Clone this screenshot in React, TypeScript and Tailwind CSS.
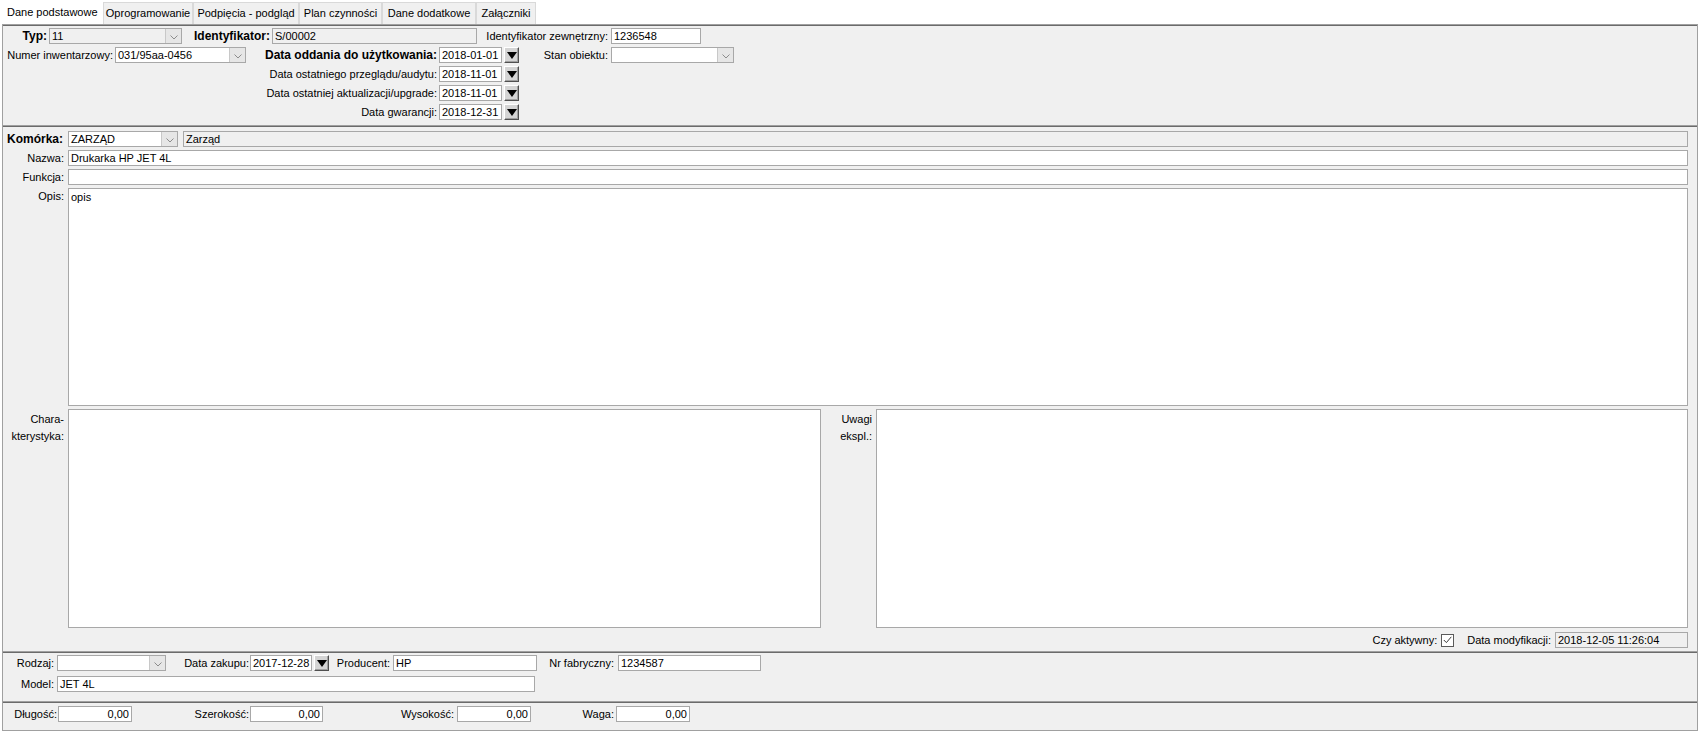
import type { ReactNode } from "react";

function Label({ className = "", bold = false, children }: { className?: string; bold?: boolean; children?: ReactNode }) {
    return (
        <div className={`flex h-4 shrink-0 items-center justify-end whitespace-nowrap ${bold ? "text-[12px] font-bold" : ""} ${className}`}>
            {children}
        </div>
    );
}

function Field({ className = "", value = "", grey = false, right = false }: { className?: string; value?: string; grey?: boolean; right?: boolean }) {
    return (
        <div className={`h-4 shrink-0 overflow-hidden whitespace-nowrap border border-[#a8a8a8] px-[2px] leading-[14px] ${grey ? "bg-[#f0f0f0]" : "bg-white"} ${right ? "text-right" : ""} ${className}`}>
            {value}
        </div>
    );
}

function Combo({ className = "", value = "", grey = false }: { className?: string; value?: string; grey?: boolean }) {
    return (
        <div className={`flex h-4 shrink-0 border border-[#a8a8a8] ${grey ? "bg-[#f0f0f0]" : "bg-white"} ${className}`}>
            <div className="flex-1 overflow-hidden whitespace-nowrap px-[2px] leading-[14px]">{value}</div>
            <div className="flex w-[16px] items-end justify-center border-l border-[#c8c8c8] bg-[#e6e6e6] pb-[3px]">
                <svg width="8" height="5" viewBox="0 0 8 5">
                    <path d="M0.5 0.5 L4 4 L7.5 0.5" stroke="#8c8c8c" strokeWidth="1" fill="none" />
                </svg>
            </div>
        </div>
    );
}

function DateBtn() {
    return (
        <div className="ml-[2px] flex h-4 w-[15px] shrink-0 items-center justify-center border border-b-[#505050] border-l-white border-r-[#505050] border-t-white bg-[#d4d4d4] shadow-[inset_-1px_-1px_0_#a0a0a0]">
            <svg width="10" height="7" viewBox="0 0 10 7">
                <path d="M0 0 H10 L5 7 Z" fill="#000" />
            </svg>
        </div>
    );
}

function DateRow({ label, value, bold = false, children }: { label: string; value: string; bold?: boolean; children?: ReactNode }) {
    return (
        <div className="flex h-4 items-center">
            <Label className="w-[436px] pr-[2px]" bold={bold}>{label}</Label>
            <Field className="w-[63px]" value={value} />
            <DateBtn />
            {children}
        </div>
    );
}

function Panel({ className = "", children }: { className?: string; children?: ReactNode }) {
    return (
        <div className={`shrink-0 border-x border-t border-[#a0a0a0] bg-[#f0f0f0] shadow-[inset_0_1px_0_#6b6b6b] ${className}`}>
            {children}
        </div>
    );
}

const tabs = ["Oprogramowanie", "Podpięcia - podgląd", "Plan czynności", "Dane dodatkowe", "Załączniki"];
const tabWidths = ["w-[90px]", "w-[106px]", "w-[83px]", "w-[94px]", "w-[60px]"];

export default function App() {
    return (
        <div className="flex h-[732px] w-[1700px] flex-col overflow-hidden bg-white font-['Liberation_Sans',Arial,sans-serif] text-[11px] text-black">
            {/* zakładki */}
            <div className="flex h-[24px] shrink-0 items-end">
                <div className="flex h-[24px] w-[103px] items-center bg-white pl-[7px] text-[11px]">Dane podstawowe</div>
                {tabs.map((t, i) => (
                    <div key={t} className={`flex h-[22px] items-center justify-center border border-b-0 border-[#d9d9d9] bg-[#f0f0f0] text-[11px] ${tabWidths[i]}`}>
                        {t}
                    </div>
                ))}
            </div>

            <div className="flex flex-1 flex-col px-[2px] pb-[1px]">
                {/* nagłówek */}
                <Panel className="flex h-[101px] flex-col gap-[3px] pt-[3px]">
                    <div className="flex h-4 items-center">
                        <Label className="w-[46px] pr-[2px]" bold>Typ:</Label>
                        <Combo className="w-[133px]" value="11" grey />
                        <Label className="w-[90px] pr-[2px]" bold>Identyfikator:</Label>
                        <Field className="w-[205px]" value="S/00002" grey />
                        <Label className="w-[134px] pr-[3px]">Identyfikator zewnętrzny:</Label>
                        <Field className="w-[90px]" value="1236548" />
                    </div>
                    <div className="flex h-4 items-center">
                        <Label className="w-[112px] pr-[2px]">Numer inwentarzowy:</Label>
                        <Combo className="w-[131px]" value="031/95aa-0456" />
                        <Label className="w-[193px] pr-[2px]" bold>Data oddania do użytkowania:</Label>
                        <Field className="w-[63px]" value="2018-01-01" />
                        <DateBtn />
                        <Label className="w-[92px] pr-[3px]">Stan obiektu:</Label>
                        <Combo className="w-[123px]" />
                    </div>
                    <DateRow label="Data ostatniego przeglądu/audytu:" value="2018-11-01" />
                    <DateRow label="Data ostatniej aktualizacji/upgrade:" value="2018-11-01" />
                    <DateRow label="Data gwarancji:" value="2018-12-31" />
                </Panel>

                {/* dane obiektu */}
                <Panel className="flex h-[526px] flex-col gap-[3px] pr-[9px] pt-[5px]">
                    <div className="flex h-4 items-center">
                        <Label className="w-[65px] pr-[5px]" bold>Komórka:</Label>
                        <Combo className="w-[110px]" value="ZARZĄD" />
                        <Field className="ml-[5px] flex-1" value="Zarząd" grey />
                    </div>
                    <div className="flex h-4 items-center">
                        <Label className="w-[65px] pr-[4px]">Nazwa:</Label>
                        <Field className="flex-1" value="Drukarka HP JET 4L" />
                    </div>
                    <div className="flex h-4 items-center">
                        <Label className="w-[65px] pr-[4px]">Funkcja:</Label>
                        <Field className="flex-1" />
                    </div>
                    <div className="flex h-[218px]">
                        <div className="w-[65px] shrink-0 pr-[4px] pt-[1px] text-right leading-[14px]">Opis:</div>
                        <div className="flex-1 border border-[#a8a8a8] bg-white px-[2px] pt-[1px] leading-[14px]">opis</div>
                    </div>
                    <div className="flex h-[219px]">
                        <div className="w-[65px] shrink-0 pr-[4px] pt-[2px] text-right leading-[17px]">
                            Chara-
                            <br />
                            kterystyka:
                        </div>
                        <div className="w-[753px] shrink-0 border border-[#a8a8a8] bg-white" />
                        <div className="w-[55px] shrink-0 pr-[4px] pt-[2px] text-right leading-[17px]">
                            Uwagi
                            <br />
                            ekspl.:
                        </div>
                        <div className="flex-1 border border-[#a8a8a8] bg-white" />
                    </div>
                    <div className="mt-[1px] flex h-4 items-center justify-end">
                        <span className="mr-[4px] whitespace-nowrap">Czy aktywny:</span>
                        <div className="flex h-[13px] w-[13px] items-center justify-center border border-[#5a5a5a] bg-white">
                            <svg width="9" height="8" viewBox="0 0 9 8">
                                <path d="M0.8 4 L3.4 6.6 L8.3 0.8" stroke="#3a3a3a" strokeWidth="1" fill="none" />
                            </svg>
                        </div>
                        <span className="ml-[13px] mr-[4px] whitespace-nowrap">Data modyfikacji:</span>
                        <Field className="w-[133px]" value="2018-12-05 11:26:04" grey />
                    </div>
                </Panel>

                {/* zakup */}
                <Panel className="flex h-[50px] flex-col gap-[5px] pt-[3px]">
                    <div className="flex h-4 items-center">
                        <Label className="w-[54px] pr-[3px]">Rodzaj:</Label>
                        <Combo className="w-[109px]" />
                        <Label className="w-[84px] pr-[1px]">Data zakupu:</Label>
                        <Field className="w-[62px]" value="2017-12-28" />
                        <DateBtn />
                        <Label className="w-[64px] pr-[3px]">Producent:</Label>
                        <Field className="w-[144px]" value="HP" />
                        <Label className="w-[81px] pr-[4px]">Nr fabryczny:</Label>
                        <Field className="w-[143px]" value="1234587" />
                    </div>
                    <div className="flex h-4 items-center">
                        <Label className="w-[54px] pr-[3px]">Model:</Label>
                        <Field className="w-[478px]" value="JET 4L" />
                    </div>
                </Panel>

                {/* wymiary */}
                <Panel className="flex flex-1 flex-col border-b pt-[4px]">
                    <div className="flex h-4 items-center">
                        <Label className="w-[55px] pr-[1px]">Długość:</Label>
                        <Field className="w-[74px]" value="0,00" right />
                        <Label className="w-[118px] pr-[1px]">Szerokość:</Label>
                        <Field className="w-[73px]" value="0,00" right />
                        <Label className="w-[134px] pr-[3px]">Wysokość:</Label>
                        <Field className="w-[74px]" value="0,00" right />
                        <Label className="w-[85px] pr-[2px]">Waga:</Label>
                        <Field className="w-[74px]" value="0,00" right />
                    </div>
                </Panel>
            </div>
        </div>
    );
}
